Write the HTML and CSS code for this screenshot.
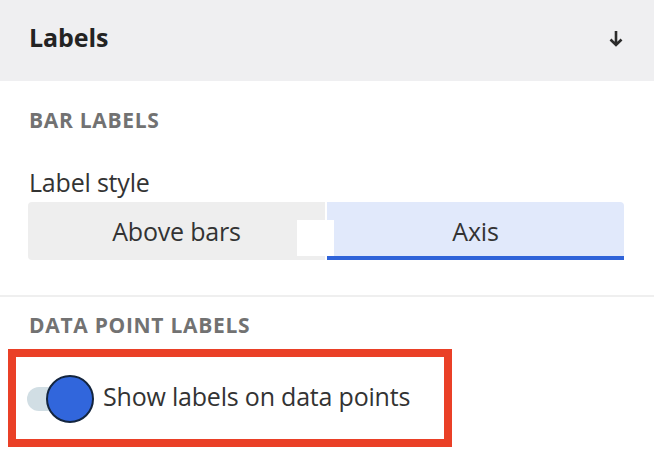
FILE: index.html
```html
<!DOCTYPE html>
<html>
<head>
<meta charset="utf-8">
<link rel="stylesheet" href="styles.css">
</head>
<body>
<div class="panel">
  <div class="header">
    <span class="title">Labels</span>
    <svg class="arrow" width="14" height="17" viewBox="0 0 14 17"><path d="M7 1 V15 M1.5 9.5 L7 15 L12.5 9.5" fill="none" stroke="#2b2b2b" stroke-width="2.6"/></svg>
  </div>
  <div class="section first">
    <div class="section-title">BAR LABELS</div>
    <div class="field-label">Label style</div>
    <div class="segmented">
      <div class="seg">Above bars</div>
      <div class="seg active">Axis</div>
      <div class="overlay"></div>
    </div>
  </div>
  <div class="section second">
    <div class="section-title">DATA POINT LABELS</div>
    <div class="highlight">
      <div class="toggle">
        <span class="track"></span>
        <span class="knob"></span>
      </div>
      <span class="toggle-label">Show labels on data points</span>
    </div>
  </div>
</div>
</body>
</html>
```
FILE: styles.css
```css
html, body {
  margin: 0;
  padding: 0;
  background: #ffffff;
}
body {
  font-family: "Open Sans", "Noto Sans", sans-serif;
  color: #333333;
  width: 654px;
  height: 452px;
  overflow: hidden;
}
.header {
  height: 81px;
  box-sizing: border-box;
  background: #efeff1;
  display: flex;
  align-items: flex-start;
  justify-content: space-between;
  padding: 22px 31px 0 29px;
}
.title {
  font-size: 25px;
  line-height: 30px;
  font-weight: 700;
  color: #232323;
  letter-spacing: -0.1px;
}
.arrow {
  display: block;
  margin-top: 8px;
}
.section {
  padding: 0 30px 0 28px;
}
.section.first {
  padding-top: 27px;
  padding-bottom: 35px;
  border-bottom: 2px solid #efefef;
}
.section-title {
  font-size: 21px;
  font-weight: 700;
  color: #727272;
  line-height: 24px;
  padding-left: 1px;
  letter-spacing: 0.7px;
}
.field-label {
  font-size: 25px;
  line-height: 30px;
  margin-top: 35px;
  padding-left: 1px;
  color: #333;
  letter-spacing: -0.2px;
}
.segmented {
  position: relative;
  display: flex;
  gap: 2px;
  margin-top: 5px;
  height: 58px;
}
.seg {
  flex: 1;
  display: flex;
  align-items: center;
  justify-content: center;
  background: #eeeeee;
  border-radius: 4px 0 0 4px;
  font-size: 25px;
  color: #333;
  box-sizing: border-box;
  letter-spacing: -0.2px;
}
.seg.active {
  background: #e1e9fb;
  border-radius: 0 4px 0 0;
  border-bottom: 4px solid #2f63d9;
  padding-top: 4px;
}
.overlay {
  position: absolute;
  left: 269px;
  top: 18px;
  width: 37px;
  height: 36px;
  background: #ffffff;
}
.section.second {
  padding-top: 16px;
}
.highlight {
  box-sizing: border-box;
  margin-left: -20px;
  margin-top: 12px;
  width: 444px;
  height: 98px;
  border: 8px solid #ea4027;
  display: flex;
  align-items: center;
  padding-left: 11px;
}
.toggle {
  position: relative;
  width: 66px;
  height: 47px;
  flex: none;
}
.track {
  position: absolute;
  left: 0;
  top: 12px;
  width: 46px;
  height: 24px;
  border-radius: 12px;
  background: #d1dee4;
}
.knob {
  position: absolute;
  left: 19px;
  top: 0;
  width: 44px;
  height: 44px;
  border-radius: 50%;
  background: #3166dc;
  border: 2px solid #13253f;
}
.toggle-label {
  font-size: 25px;
  color: #333;
  margin-left: 10px;
  margin-top: -4px;
  letter-spacing: -0.2px;
}
```
